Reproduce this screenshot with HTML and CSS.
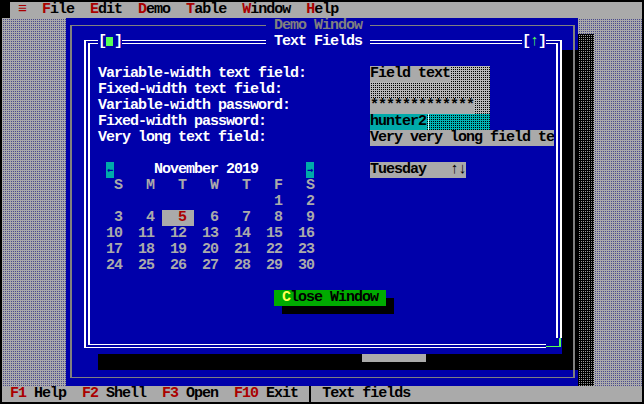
FILE: index.html
```html
<!DOCTYPE html>
<html lang="en">
<head>
<meta charset="utf-8">
<title>Text Fields</title>
<link rel="stylesheet" href="styles.css">
</head>
<body>
<div class="screen">
  <div class="menubar">
    <span class="menu-corner"></span>
    <span class="menu-item"><span class="hot">≡</span></span>
    <span class="menu-item"><span class="hot">F</span>ile</span>
    <span class="menu-item"><span class="hot">E</span>dit</span>
    <span class="menu-item"><span class="hot">D</span>emo</span>
    <span class="menu-item"><span class="hot">T</span>able</span>
    <span class="menu-item"><span class="hot">W</span>indow</span>
    <span class="menu-item"><span class="hot">H</span>elp</span>
  </div>

  <div class="desktop">
    <div class="window">
      <div class="dialog">
        <div class="dlg-frame"></div>
        <span class="dlg-close">[<span class="close-box"></span>]</span>
        <span class="dlg-title">Text Fields</span>
        <span class="dlg-zoom">[<span class="bright">↑</span>]</span>
        <span class="dlg-grip"></span>

        <div class="content">
          <div class="form">
            <span class="label">Variable-width text field:</span>
            <span class="field shade"><span class="value">Field text</span></span>
            <span class="label">Fixed-width text field:</span>
            <span class="field shade"></span>
            <span class="label">Variable-width password:</span>
            <span class="field shade"><span class="value">*************</span></span>
            <span class="label">Fixed-width password:</span>
            <span class="field shade-cyan"><span class="value cyan">hunter2</span><span class="cursor"></span></span>
            <span class="label">Very long text field:</span>
            <span class="field long"><span class="value">Very very long field te</span></span>
          </div>

          <div class="lower">
            <div class="calendar">
              <div class="cal-head">
                <span class="cal-arrow">←</span>
                <span class="cal-title">November 2019</span>
                <span class="cal-arrow next">→</span>
              </div>
              <div class="cal-grid">
                <span>S</span><span>M</span><span>T</span><span>W</span><span>T</span><span>F</span><span>S</span>
                <span class="first">1</span><span>2</span>
                <span>3</span><span>4</span><span class="today">5</span><span>6</span><span>7</span><span>8</span><span>9</span>
                <span>10</span><span>11</span><span>12</span><span>13</span><span>14</span><span>15</span><span>16</span>
                <span>17</span><span>18</span><span>19</span><span>20</span><span>21</span><span>22</span><span>23</span>
                <span>24</span><span>25</span><span>26</span><span>27</span><span>28</span><span>29</span><span>30</span>
              </div>
            </div>
            <div class="spinner"><span>Tuesday</span><span>↑↓</span></div>
          </div>

          <div class="buttons">
            <button class="btn"><span class="btn-hot">C</span>lose Window</button>
          </div>
        </div>
      </div>
      <div class="win-frame"></div>
      <div class="win-title">Demo Window</div>
      <div class="win-mark"></div>
    </div>
    <div class="win-shadow"></div>
  </div>

  <div class="statusbar">
    <div class="keys">
      <span><span class="hot">F1</span> Help</span>
      <span><span class="hot">F2</span> Shell</span>
      <span><span class="hot">F3</span> Open</span>
      <span><span class="hot">F10</span> Exit</span>
    </div>
    <span class="status-sep"></span>
    <span class="hint">Text fields</span>
  </div>
</div>
</body>
</html>
```

FILE: styles.css
```css
:root {
  --blue: #0000aa;
  --cyan: #00aaaa;
  --gray: #aaaaaa;
  --dgray: #808080;
  --red: #aa0000;
  --green: #00aa00;
  --lgreen: #55ff55;
  --yellow: #ffff55;
  --white: #ffffff;
}

* {
  box-sizing: border-box;
  margin: 0;
  padding: 0;
}

html, body {
  background: #000;
}

body {
  margin: 0;
  font-family: "Liberation Mono", "DejaVu Sans Mono", monospace;
  font-weight: bold;
  font-size: 15px;
  line-height: 16px;
  letter-spacing: -1px;
  color: #000;
}

.screen {
  width: 644px;
  height: 404px;
  padding: 2px;
  display: grid;
  grid-template-rows: 16px 368px 16px;
  grid-template-columns: 640px;
}

/* ---------- menu bar ---------- */
.menubar {
  display: flex;
  background: var(--gray);
  white-space: pre;
}
.menu-corner {
  width: 8px;
  background: #000;
}
.menu-item {
  padding: 0 8px;
}
.hot {
  color: var(--red);
}

/* ---------- desktop ---------- */
.desktop {
  position: relative;
  background-color: #aaaaaa;
  background-image: conic-gradient(from 90deg at 1px 1px, #4a4a8e 0 25%, transparent 0);
  background-size: 2px 2px;
}

.window {
  position: absolute;
  left: 64px;
  top: 0;
  width: 512px;
  height: 368px;
  background: var(--blue);
}

.win-shadow {
  position: absolute;
  left: 576px;
  top: 16px;
  width: 16px;
  height: 352px;
  background-color: #000;
  background-image: conic-gradient(from 90deg at 1px 1px, #9a9a9a 0 25%, transparent 0);
  background-size: 2px 2px;
}

.win-frame {
  position: absolute;
  left: 4px;
  top: 7px;
  right: 3px;
  bottom: 8px;
  border: solid var(--dgray);
  border-width: 1px 2px;
}

.win-title {
  position: absolute;
  top: 0;
  left: 200px;
  padding: 0 8px;
  background: var(--blue);
  color: var(--dgray);
  white-space: pre;
}

.win-mark {
  position: absolute;
  left: 296px;
  top: 336px;
  width: 64px;
  height: 8px;
  background: var(--gray);
}

/* ---------- dialog ---------- */
.dialog {
  position: absolute;
  left: 16px;
  top: 16px;
  width: 480px;
  height: 320px;
  background: var(--blue);
  box-shadow: 16px 16px 0 #000;
  color: var(--white);
}

.dlg-frame {
  position: absolute;
  left: 2px;
  top: 6px;
  right: 0;
  bottom: 6px;
  border: solid var(--white);
  border-width: 1px 2px;
}
.dlg-frame::before {
  content: "";
  position: absolute;
  inset: 2px;
  border: solid var(--white);
  border-width: 1px 2px;
}

.dlg-close,
.dlg-title,
.dlg-zoom {
  position: absolute;
  top: 0;
  height: 16px;
  background: var(--blue);
  color: var(--white);
  white-space: pre;
  display: flex;
}
.dlg-close { left: 16px; }
.dlg-zoom { left: 440px; }
.dlg-title {
  left: 184px;
  padding: 0 8px;
}
.bright {
  color: var(--lgreen);
}
.close-box {
  width: 8px;
  height: 16px;
  background: linear-gradient(var(--lgreen), var(--lgreen)) 0 3px / 7px 9px no-repeat;
}

.dlg-grip {
  position: absolute;
  left: 464px;
  top: 304px;
  width: 16px;
  height: 16px;
  background: var(--blue);
}
.dlg-grip::before {
  content: "";
  position: absolute;
  left: 0;
  top: 0;
  width: 13px;
  height: 8px;
  border-right: 2px solid var(--lgreen);
  border-bottom: 1px solid var(--lgreen);
}

.content {
  padding: 32px 0 0 16px;
}

/* form rows */
.form {
  display: grid;
  grid-template-columns: 272px auto;
  grid-auto-rows: 16px;
  white-space: pre;
}
.label {
  color: var(--white);
}
.field {
  display: flex;
  width: 120px;
  height: 16px;
  color: #000;
}
.shade {
  background-color: #b8b8b8;
  background-image: conic-gradient(from 90deg at 1px 1px, #000 0 25%, transparent 0);
  background-size: 2px 2px;
}
.shade-cyan {
  background-color: #00b4b4;
  background-image: conic-gradient(from 90deg at 1px 1px, #000 0 25%, transparent 0);
  background-size: 2px 2px;
}
.value {
  background: var(--gray);
}
.value.cyan {
  background: var(--cyan);
}
.field.long {
  width: 184px;
  background: var(--gray);
}
.cursor {
  width: 8px;
  height: 16px;
  background: linear-gradient(to right, transparent 2px, #c8ffff 2px, #c8ffff 3px, transparent 3px);
}

/* calendar + spinner */
.lower {
  display: grid;
  grid-template-columns: 272px auto;
  margin-top: 16px;
  align-items: start;
}
.calendar {
  width: 224px;
}
.cal-head {
  display: flex;
  height: 16px;
  white-space: pre;
}
.cal-arrow {
  width: 8px;
  margin-left: 8px;
  background: var(--cyan);
  color: var(--blue);
  text-align: center;
  font-family: "DejaVu Sans Mono", monospace;
  font-size: 10px;
  letter-spacing: 0;
}
.cal-title {
  margin-left: 40px;
  color: var(--white);
}
.cal-arrow.next {
  margin-left: 48px;
}
.cal-grid {
  display: grid;
  grid-template-columns: repeat(7, 32px);
  grid-auto-rows: 16px;
  color: var(--gray);
}
.cal-grid span {
  text-align: right;
  padding-right: 8px;
}
.cal-grid .first {
  grid-column-start: 6;
}
.cal-grid .today {
  background: var(--gray);
  color: var(--red);
}

.spinner {
  display: flex;
  justify-content: space-between;
  width: 96px;
  height: 16px;
  background: var(--gray);
  color: #000;
}

/* button */
.buttons {
  margin-top: 16px;
  padding-left: 176px;
  display: flex;
}
.btn {
  font: inherit;
  letter-spacing: inherit;
  line-height: 16px;
  height: 16px;
  border: 0;
  padding: 0 8px;
  background: var(--green);
  color: #000;
  box-shadow: 8px 8px 0 #000;
  white-space: pre;
}
.btn-hot {
  color: var(--yellow);
}

/* ---------- status bar ---------- */
.statusbar {
  display: flex;
  background: var(--gray);
  padding-left: 8px;
  white-space: pre;
}
.keys {
  display: flex;
  gap: 16px;
}
.status-sep {
  width: 8px;
  height: 16px;
  margin: 0 8px;
  background: linear-gradient(to right, transparent 3px, #000 3px, #000 5px, transparent 5px);
}
```
